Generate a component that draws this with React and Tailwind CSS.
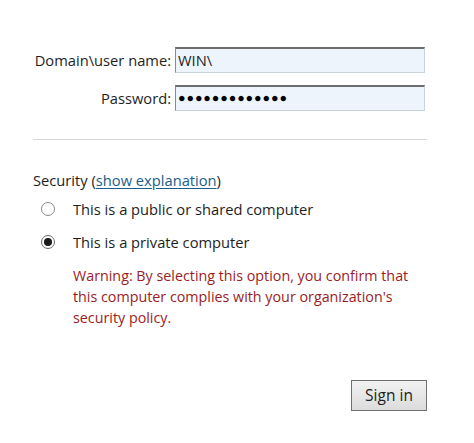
export default function App() {
    return (
        <div className="w-[474px] h-[443px] bg-white text-[#1e1e1e] font-['Open_Sans','Noto_Sans',sans-serif] text-[14.7px]">
            <div className="pl-[33px] pt-[47px] w-[427px]">
                <div className="grid grid-cols-[138px_250px] gap-x-[4px] gap-y-[12px] items-center">
                    <label className="text-right leading-none">Domain\user name:</label>
                    <div className="h-[26px] bg-[#eef4fb] border border-[#c9d3dc] border-t-[#6d6d6d] border-l-[#8a8a8a] border-t-2 flex items-center px-[2px]">
                        WIN\
                    </div>
                    <label className="text-right leading-none">Password:</label>
                    <div className="h-[26px] bg-[#eef4fb] border border-[#c9d3dc] border-t-[#6d6d6d] border-l-[#8a8a8a] border-t-2 flex items-center px-[2px] text-[12.5px] tracking-[0.9px] text-black">
                        ●●●●●●●●●●●●●
                    </div>
                </div>

                <div className="mt-[28px] h-px bg-[#d6d6d6] w-[394px]" />

                <div className="mt-[30px] leading-[20px]">
                    Security (<span className="text-[#1a5e8c] underline underline-offset-2">show explanation</span>)
                </div>

                <div className="mt-[9px] flex items-center gap-[18px] pl-[8px] leading-[20px]">
                    <span className="w-[14px] h-[14px] rounded-full border border-[#8a8a8a] bg-white" />
                    <span>This is a public or shared computer</span>
                </div>
                <div className="mt-[13px] flex items-center gap-[18px] pl-[8px] leading-[20px]">
                    <span className="w-[14px] h-[14px] rounded-full border border-[#6a6a6a] bg-white flex items-center justify-center">
                        <span className="w-[8px] h-[8px] rounded-full bg-[#1a1a1a]" />
                    </span>
                    <span>This is a private computer</span>
                </div>
                <p className="mt-[13px] ml-[40px] text-[#9b1c24] text-[14.3px] leading-[21px] w-[356px]">
                    Warning: By selecting this option, you confirm that this computer complies with your organization's security policy.
                </p>

                <div className="mt-[52px] flex justify-end">
                    <button className="w-[76px] h-[31px] border border-[#707070] bg-gradient-to-b from-[#f2f2f2] to-[#dcdcdc] text-[15.5px] text-[#1e1e1e]">
                        Sign in
                    </button>
                </div>
            </div>
        </div>
    );
}
